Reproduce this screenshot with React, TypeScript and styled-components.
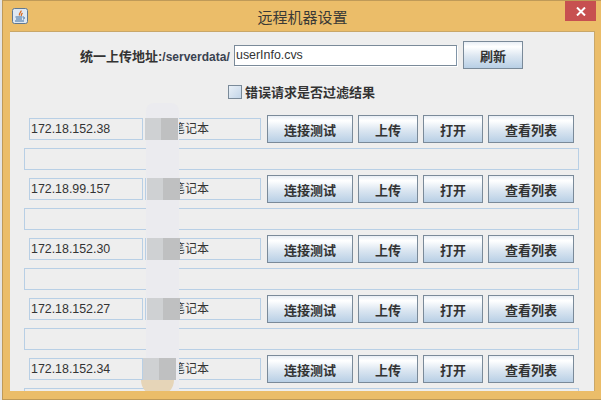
import styled, { createGlobalStyle } from 'styled-components';

const GlobalStyle = createGlobalStyle`
html, body {
  margin: 0;
  padding: 0;
  width: 601px;
  height: 400px;
  overflow: hidden;
  background: #d9d9d9;
  font-family: "Liberation Sans", "Noto Sans CJK SC", sans-serif;
}
`;

const Desktop = styled.div`
width: 601px;
height: 400px;
padding-left: 2px;
box-sizing: border-box;
background: #e4e4e4;
`;

const Frame = styled.div`
position: relative;
width: 599px;
height: 400px;
box-sizing: border-box;
background: #ebbd69;
border-top: 1px solid #bf9a58;
border-left: 1px solid #bf9a58;
border-bottom: 1px solid #bf9a58;
padding: 0 6px 8px 7px;
display: flex;
flex-direction: column;
`;

const TitleBar = styled.div`
position: relative;
height: 30px;
flex-shrink: 0;
display: flex;
align-items: center;
justify-content: center;
`;

const Title = styled.span`
font: 15px "Noto Sans CJK SC", sans-serif;
color: #3a3a36;
margin-top: 1px;
`;

const AppIcon = styled.svg`
position: absolute;
left: 2px;
top: 7px;
`;

const CloseButton = styled.div`
position: absolute;
right: -1px;
top: 0;
width: 31px;
height: 20px;
background: #c75050;
display: flex;
align-items: center;
justify-content: center;
`;

const Body = styled.div`
position: relative;
flex: 1;
overflow: hidden;
background: #eeeeee;
border-top: 1px solid #c9a768;
border-right: 1px solid #c9a768;
display: flex;
flex-direction: column;
`;

const UploadRow = styled.div`
display: flex;
align-items: center;
height: 28px;
margin-top: 9px;
padding-left: 70px;
`;

const UploadLabel = styled.span`
font: bold 13px "Liberation Sans", "Noto Sans CJK SC", sans-serif;
color: #333333;
width: 154px;
white-space: nowrap;

b {
  font-size: 12px;
  color: #3a4250;
}
`;

const FileInput = styled.div`
width: 223px;
height: 21px;
box-sizing: border-box;
background: #ffffff;
border: 1px solid #7a8a99;
border-right-color: #8195a8;
padding-left: 1px;
font-size: 12.4px;
line-height: 19px;
color: #333333;
box-shadow: 1px 1px 0 #ffffff;
`;

const JavaButton = styled.div<{ $width: number }>`
width: ${props => props.$width}px;
height: 28px;
box-sizing: border-box;
flex-shrink: 0;
display: flex;
align-items: center;
justify-content: center;
border: 1px solid #7a8a99;
background: linear-gradient(#e8eef5 0%, #ffffff 18%, #dbe6f1 55%, #b8cfe5 100%);
font: bold 13px "Noto Sans CJK SC", sans-serif;
color: #333333;
`;

const RefreshButton = styled(JavaButton)`
margin-left: 6px;
`;

const FilterRow = styled.div`
display: flex;
align-items: center;
height: 15px;
margin-top: 15px;
padding-left: 218px;
`;

const CheckBox = styled.div`
width: 14px;
height: 14px;
box-sizing: border-box;
border: 1px solid #7a8a99;
background: linear-gradient(135deg, #e9f0f7, #c3d5e8);
margin-right: 3px;
`;

const FilterLabel = styled.span`
font: bold 13px "Noto Sans CJK SC", sans-serif;
color: #333333;
white-space: nowrap;
`;

const MachineList = styled.div`
display: flex;
flex-direction: column;
margin-top: 16px;
padding-left: 14px;
`;

const MachineRow = styled.div`
display: flex;
align-items: center;
height: 28px;
padding-left: 5px;
`;

const ReadOnlyField = styled.div<{ $width: number; $gap: number }>`
width: ${props => props.$width}px;
height: 22px;
margin-right: ${props => props.$gap}px;
box-sizing: border-box;
flex-shrink: 0;
border: 1px solid #b8cfe5;
background: #eeeeee;
padding-left: 1px;
font: 12.4px/20px "Liberation Sans", "Noto Sans CJK SC", sans-serif;
color: #333333;
white-space: nowrap;
`;

const NameField = styled(ReadOnlyField)`
font-size: 12px;
padding-left: 27px;
`;

const RowButtons = styled.div`
display: flex;
gap: 5px;
`;

const ResultBar = styled.div`
width: 555px;
height: 22px;
box-sizing: border-box;
border: 1px solid #b8cfe5;
margin: 5px 0;
background: #eeeeee;
flex-shrink: 0;
`;

const Smear = styled.div`
position: absolute;
left: 136px;
top: 71px;
width: 33px;
height: 290px;
background: #ebebef;
border-radius: 8px 8px 0 0;
`;

const SmearBlock = styled.div<{ $top: number; $left: number }>`
position: absolute;
left: ${props => props.$left}px;
top: ${props => props.$top}px;
width: 33px;
height: 22px;
background: linear-gradient(90deg, #cfd1d3 0 47%, #bfc0c1 47% 100%);
`;

const SmearTip = styled.div`
position: absolute;
left: 131px;
top: 348px;
width: 33px;
height: 16px;
border-radius: 0 0 16px 16px;
background: #e6d5b8;
`;

const machines = [
  { ip: '172.18.152.38', left: 135 },
  { ip: '172.18.99.157', left: 137 },
  { ip: '172.18.152.30', left: 137 },
  { ip: '172.18.152.27', left: 137 },
  { ip: '172.18.152.34', left: 133 },
];

export default function App() {
  return (
    <Desktop>
      <GlobalStyle />
      <Frame>
        <TitleBar>
          <AppIcon width="16" height="16" viewBox="0 0 16 16">
            <rect x="0.5" y="0.5" width="15" height="15" rx="2" fill="#dfe8f2" stroke="#5f7892" />
            <path d="M9 2.5c1 1.5-3 3-1.5 5M10.5 5c-1 1-2 1.500-1 3" stroke="#d9681d" strokeWidth="1.300" fill="none" />
            <path d="M3.500 9h7M4 11h6M3 13h9M11 9c2 0 2 2 0 2" stroke="#3d6c9e" strokeWidth="1" fill="none" />
          </AppIcon>
          <Title>远程机器设置</Title>
          <CloseButton>
            <svg width="10" height="9" viewBox="0 0 10 9">
              <path d="M1 0.500L9 8.500M9 0.500L1 8.500" stroke="#ffffff" strokeWidth="2" />
            </svg>
          </CloseButton>
        </TitleBar>
        <Body>
          <UploadRow>
            <UploadLabel>统一上传地址:<b>/serverdata/</b></UploadLabel>
            <FileInput>userInfo.cvs</FileInput>
            <RefreshButton $width={60}>刷新</RefreshButton>
          </UploadRow>
          <FilterRow>
            <CheckBox />
            <FilterLabel>错误请求是否过滤结果</FilterLabel>
          </FilterRow>
          <MachineList>
            {machines.map(machine => (
              <div key={machine.ip}>
                <MachineRow>
                  <ReadOnlyField $width={114} $gap={2}>{machine.ip}</ReadOnlyField>
                  <NameField $width={116} $gap={6}>笔记本</NameField>
                  <RowButtons>
                    <JavaButton $width={86}>连接测试</JavaButton>
                    <JavaButton $width={60}>上传</JavaButton>
                    <JavaButton $width={60}>打开</JavaButton>
                    <JavaButton $width={86}>查看列表</JavaButton>
                  </RowButtons>
                </MachineRow>
                <ResultBar />
              </div>
            ))}
          </MachineList>
          <Smear />
          {machines.map((machine, index) => (
            <SmearBlock key={machine.ip} $left={machine.left} $top={86 + index * 60} />
          ))}
          <SmearTip />
        </Body>
      </Frame>
    </Desktop>
  );
}
